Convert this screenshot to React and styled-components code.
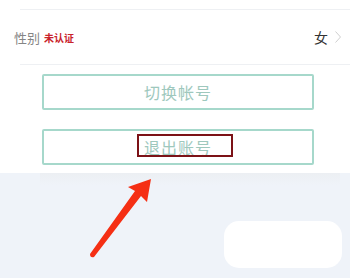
import styled, { createGlobalStyle } from 'styled-components'

const GlobalStyle = createGlobalStyle`
body{
margin:0;
background:#eff3f9;
font-family:"Noto Sans CJK SC","Noto Sans",sans-serif;
}
`

const Page = styled.div`
position:relative;
width:350px;
height:278px;
overflow:hidden;
background:#eff3f9;
`

const Panel = styled.div`
background:#ffffff;
padding-top:9px;
height:164px;
`

const Shade = styled.div`
height:12px;
margin:0 10px 0 40px;
background:linear-gradient(#eceff3,#eff3f9);
`

const Row = styled.div`
display:flex;
align-items:center;
height:54px;
margin-left:20px;
padding-right:9px;
border-top:1px solid #eef0f3;
border-bottom:1px solid #eef0f3;
`

const Label = styled.span`
margin-left:-6px;
font-size:13px;
color:#858585;
`

const Badge = styled.span`
margin-left:4px;
font-size:10px;
font-weight:700;
color:#c9232c;
`

const Value = styled.span`
margin-left:auto;
font-size:14px;
color:#333;
`

const Chevron = styled.svg`
margin-left:7px;
`

const Actions = styled.div`
display:flex;
flex-direction:column;
gap:19px;
padding:9px 36px 0 42px;
`

const Button = styled.div`
position:relative;
display:flex;
align-items:center;
justify-content:center;
height:32px;
border:2px solid #a6d8cb;
border-radius:2px;
font-size:16px;
letter-spacing:1px;
color:#9ec8bd;
`

const Highlight = styled.div`
position:absolute;
left:93px;
top:3px;
width:92px;
height:19px;
border:2px solid #7c1217;
`

const Footer = styled.div`
display:flex;
justify-content:flex-end;
padding:36px 8px 0 0;
`

const Card = styled.div`
width:118px;
height:47px;
border-radius:15px;
background:#ffffff;
`

const Arrow = styled.svg`
position:absolute;
left:0;
top:0;
`

export default function App() {
    return (
        <Page>
            <GlobalStyle />
            <Panel>
                <Row>
                    <Label>性别</Label>
                    <Badge>未认证</Badge>
                    <Value>女</Value>
                    <Chevron width="6" height="12" viewBox="0 0 6 12">
                        <polyline points="0.5,0.5 5.5,6 0.5,11.5" fill="none" stroke="#cfcfcf" strokeWidth="1" />
                    </Chevron>
                </Row>
                <Actions>
                    <Button>切换帐号</Button>
                    <Button>
                        退出账号
                        <Highlight />
                    </Button>
                </Actions>
            </Panel>
            <Shade />
            <Footer>
                <Card />
            </Footer>
            <Arrow width="350" height="278" viewBox="0 0 350 278">
                <path d="M151 179 L128 187 L135 191 L90 254 Q90 258 94 257 L141 196 L147 202 Z" fill="#f52f14" />
            </Arrow>
        </Page>
    )
}
